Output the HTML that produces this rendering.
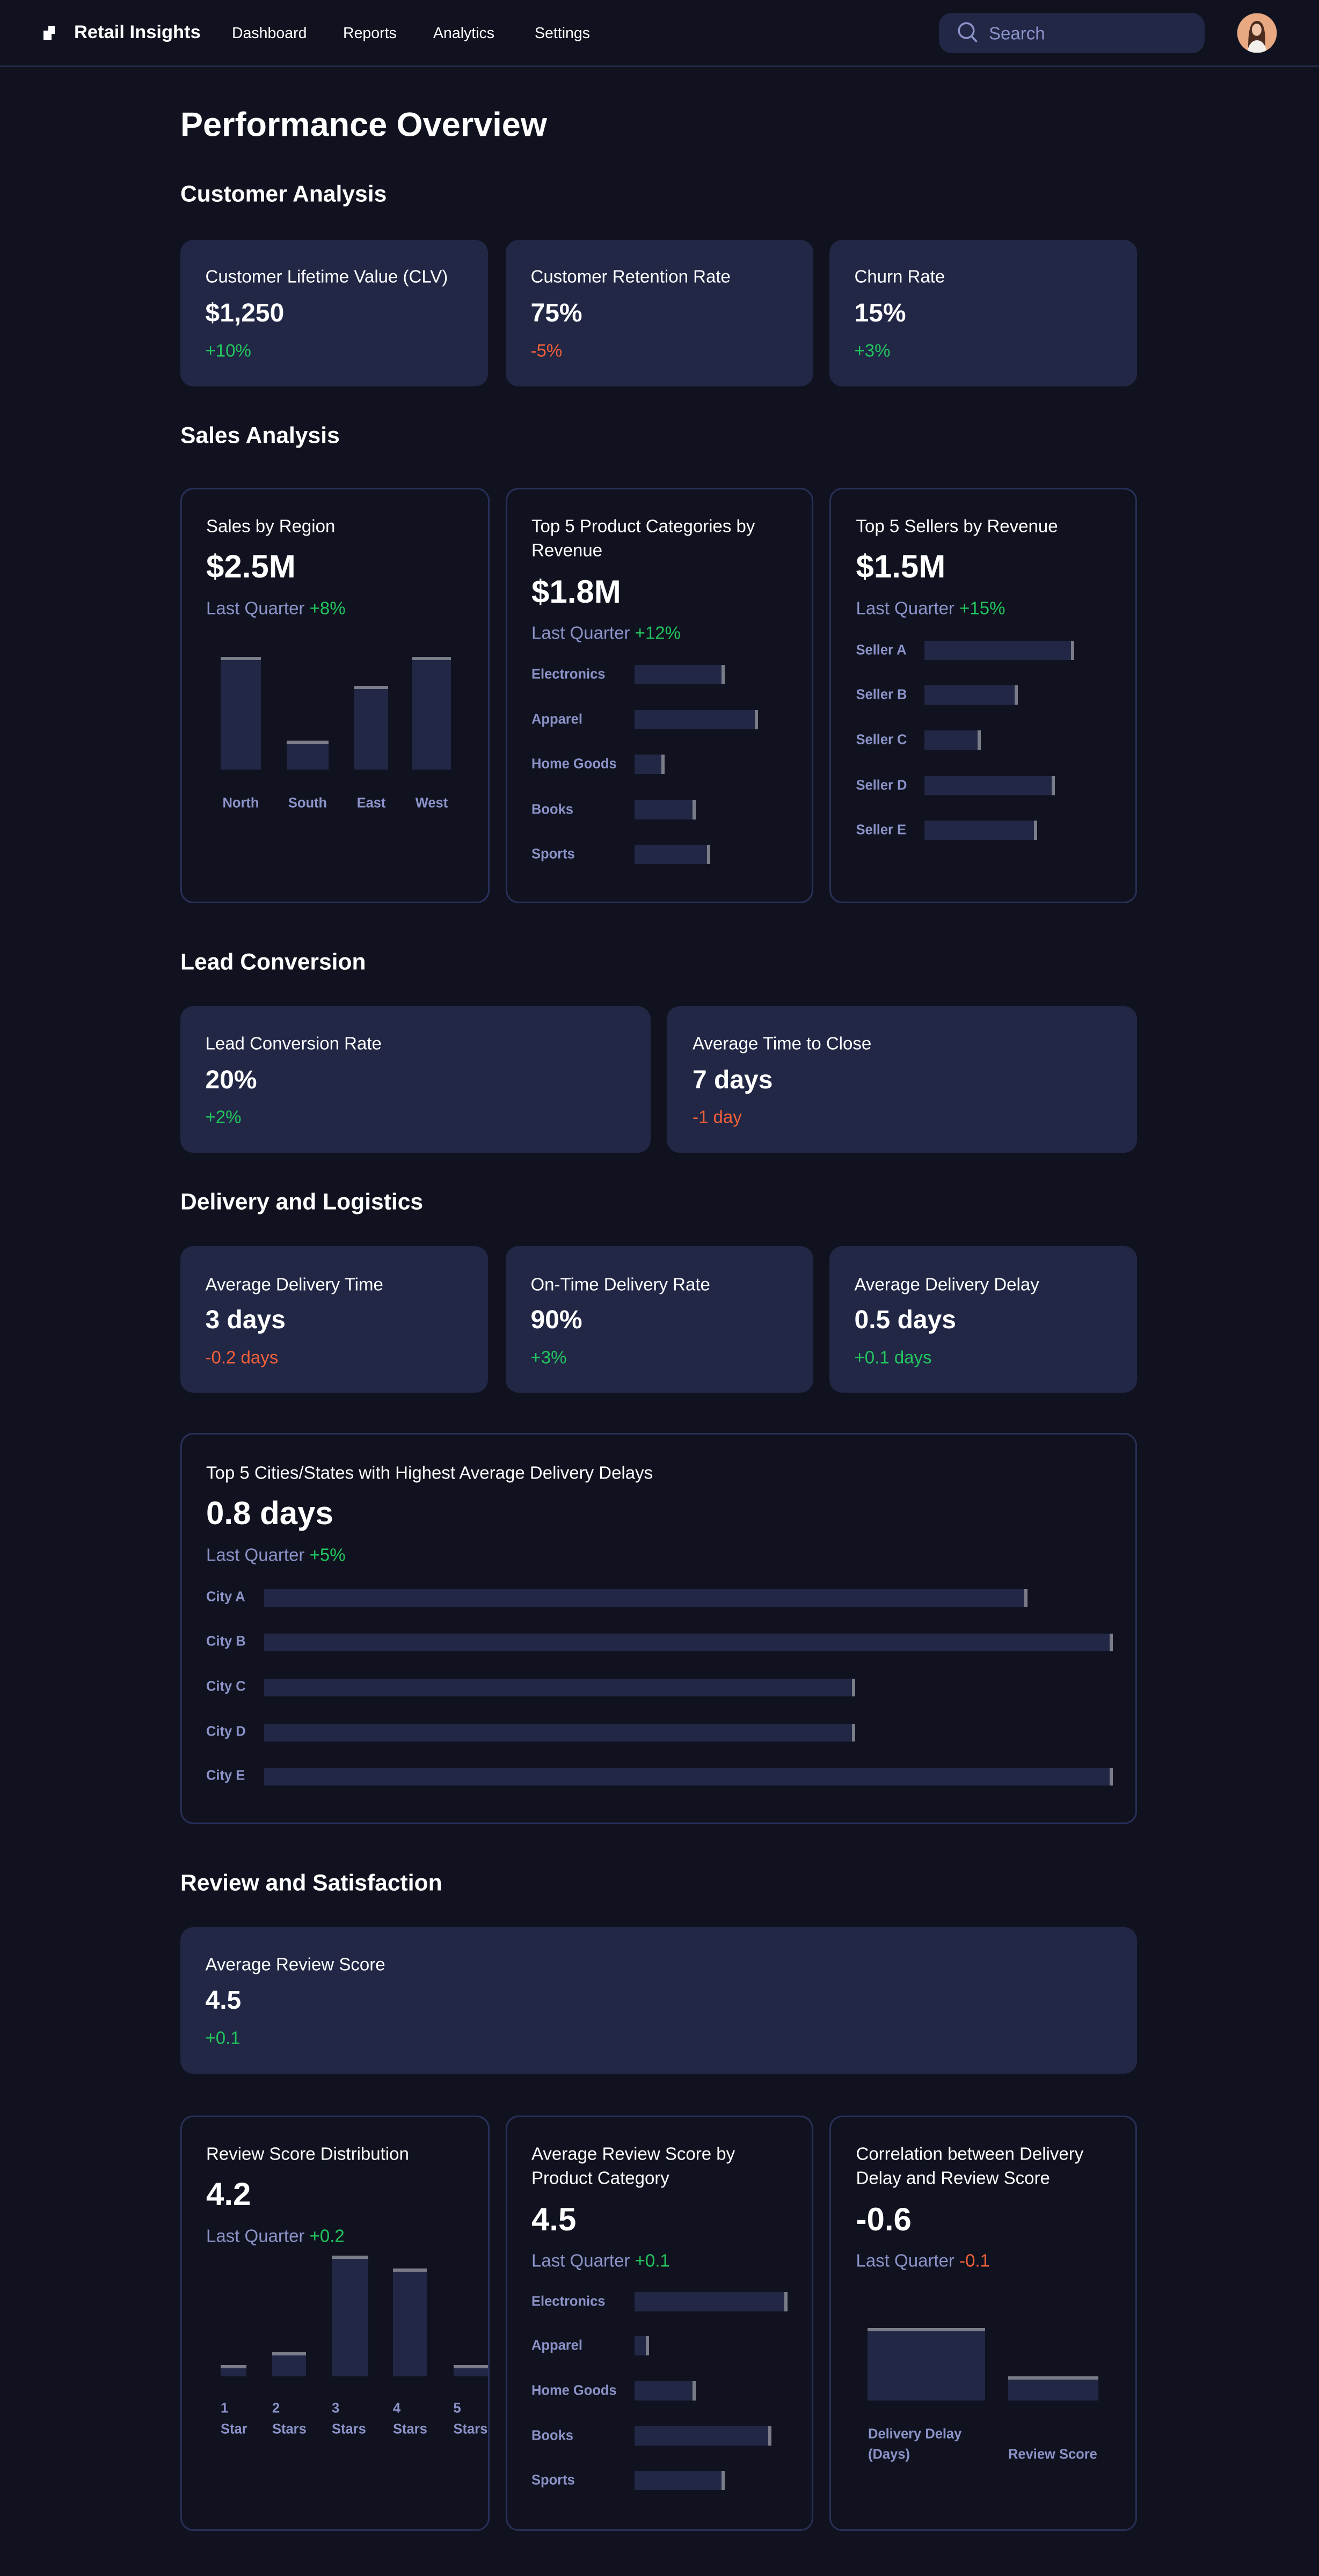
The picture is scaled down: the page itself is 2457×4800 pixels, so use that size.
<!DOCTYPE html>
<html><head><meta charset="utf-8">
<style>
html,body{margin:0;padding:0;background:#10131f;}
body{width:819px;height:1600px;zoom:3;position:relative;overflow:hidden;font-family:"Liberation Sans",sans-serif;color:#fff;}
.a{position:absolute;white-space:nowrap;transform:translateY(-50%);line-height:1;}
.card{position:absolute;background:#212745;border-radius:8px;}
.bcard{position:absolute;border:1px solid #283058;border-radius:8px;box-sizing:border-box;}
.h{font-size:14.2px;font-weight:bold;}
.ct{font-size:11px;}
.cv{font-size:16px;font-weight:bold;}
.bv{font-size:20px;font-weight:bold;}
.g{color:#22c55e;}
.r{color:#f2603a;}
.s{color:#8b93c9;}
.lab{font-size:8.5px;font-weight:bold;color:#8b93c9;}
.vb{position:absolute;background:#212745;border-top:2px solid #7a7d88;box-sizing:border-box;}
.hb{position:absolute;background:#212745;border-right:2px solid #7a7d88;box-sizing:border-box;}
</style></head><body>
<!-- header -->
<div style="position:absolute;left:0;top:40.5px;width:819px;height:1px;background:#232a4a"></div>
<div style="position:absolute;left:27px;top:19px;width:5px;height:6px;background:#fff"></div>
<div style="position:absolute;left:30px;top:16px;width:4px;height:5px;background:#fff"></div>
<div class="a" style="left:46px;top:20px;font-size:11.5px;font-weight:bold">Retail Insights</div>
<div class="a" style="left:144px;top:20.5px;font-size:9.5px">Dashboard</div>
<div class="a" style="left:213px;top:20.5px;font-size:9.5px">Reports</div>
<div class="a" style="left:269px;top:20.5px;font-size:9.5px">Analytics</div>
<div class="a" style="left:332px;top:20.5px;font-size:9.5px">Settings</div>
<div style="position:absolute;left:583px;top:8px;width:165px;height:25px;background:#212745;border-radius:8px"></div>
<svg style="position:absolute;left:594px;top:13px" width="14" height="15" viewBox="0 0 14 15"><circle cx="6" cy="6" r="4.6" fill="none" stroke="#8b93c9" stroke-width="1.2"/><line x1="9.4" y1="9.6" x2="12.5" y2="13" stroke="#8b93c9" stroke-width="1.2"/></svg>
<div class="a s" style="left:614px;top:20.5px;font-size:11px">Search</div>
<svg style="position:absolute;left:768px;top:8px" width="25" height="25" viewBox="0 0 25 25"><defs><clipPath id="c"><circle cx="12.5" cy="12.5" r="12.3"/></clipPath></defs><circle cx="12.5" cy="12.5" r="12.3" fill="#e8a882"/><g clip-path="url(#c)"><path d="M7 22 C7 12 8 5 12.5 5 C17 5 18 12 17.5 22 Z" fill="#4a2c1f"/><ellipse cx="12.3" cy="10.5" rx="3" ry="3.8" fill="#f0c4a8"/><path d="M6 26 C7 19 10 17 12.5 17 C15 17 18 19 19 26 Z" fill="#f2f0ea"/></g></svg>

<div class="a" style="left:112px;top:77.5px;font-size:21px;font-weight:bold">Performance Overview</div>

<!-- Customer Analysis -->
<div class="a h" style="left:112px;top:120.5px">Customer Analysis</div>
<div class="card" style="left:112px;top:149px;width:191px;height:91px"></div>
<div class="card" style="left:314px;top:149px;width:191px;height:91px"></div>
<div class="card" style="left:515px;top:149px;width:191px;height:91px"></div>
<div class="a ct" style="left:127.5px;top:171.5px">Customer Lifetime Value (CLV)</div>
<div class="a cv" style="left:127.5px;top:194.5px">$1,250</div>
<div class="a ct g" style="left:127.5px;top:217.5px">+10%</div>
<div class="a ct" style="left:329.5px;top:171.5px">Customer Retention Rate</div>
<div class="a cv" style="left:329.5px;top:194.5px">75%</div>
<div class="a ct r" style="left:329.5px;top:217.5px">-5%</div>
<div class="a ct" style="left:530.5px;top:171.5px">Churn Rate</div>
<div class="a cv" style="left:530.5px;top:194.5px">15%</div>
<div class="a ct g" style="left:530.5px;top:217.5px">+3%</div>

<!-- Sales Analysis -->
<div class="a h" style="left:112px;top:270.5px">Sales Analysis</div>
<div class="bcard" style="left:112px;top:303px;width:192px;height:258px"></div>
<div class="bcard" style="left:314px;top:303px;width:191px;height:258px"></div>
<div class="bcard" style="left:515px;top:303px;width:191px;height:258px"></div>
<div class="a ct" style="left:128px;top:326.5px">Sales by Region</div>
<div class="a bv" style="left:128px;top:352px">$2.5M</div>
<div class="a ct s" style="left:128px;top:377.5px">Last Quarter <span class="g">+8%</span></div>
<div class="vb" style="left:137px;top:408px;width:25px;height:70px"></div>
<div class="vb" style="left:178px;top:460px;width:26px;height:18px"></div>
<div class="vb" style="left:220px;top:426px;width:21px;height:52px"></div>
<div class="vb" style="left:256px;top:408px;width:24px;height:70px"></div>
<div class="a lab" style="left:149.5px;top:499px;transform:translate(-50%,-50%)">North</div>
<div class="a lab" style="left:191px;top:499px;transform:translate(-50%,-50%)">South</div>
<div class="a lab" style="left:230.5px;top:499px;transform:translate(-50%,-50%)">East</div>
<div class="a lab" style="left:268px;top:499px;transform:translate(-50%,-50%)">West</div>

<div class="a ct" style="left:330px;top:326.5px">Top 5 Product Categories by</div>
<div class="a ct" style="left:330px;top:341.5px">Revenue</div>
<div class="a bv" style="left:330px;top:367.5px">$1.8M</div>
<div class="a ct s" style="left:330px;top:393px">Last Quarter <span class="g">+12%</span></div>
<div class="a lab" style="left:330px;top:419px">Electronics</div><div class="hb" style="left:394px;top:413px;width:56px;height:12px"></div>
<div class="a lab" style="left:330px;top:447px">Apparel</div><div class="hb" style="left:394px;top:441px;width:76.5px;height:12px"></div>
<div class="a lab" style="left:330px;top:474.5px">Home Goods</div><div class="hb" style="left:394px;top:468.5px;width:18.5px;height:12px"></div>
<div class="a lab" style="left:330px;top:503px">Books</div><div class="hb" style="left:394px;top:497px;width:38px;height:12px"></div>
<div class="a lab" style="left:330px;top:530.5px">Sports</div><div class="hb" style="left:394px;top:524.5px;width:47px;height:12px"></div>

<div class="a ct" style="left:531.5px;top:326.5px">Top 5 Sellers by Revenue</div>
<div class="a bv" style="left:531.5px;top:352px">$1.5M</div>
<div class="a ct s" style="left:531.5px;top:377.5px">Last Quarter <span class="g">+15%</span></div>
<div class="a lab" style="left:531.5px;top:404px">Seller A</div><div class="hb" style="left:574px;top:398px;width:93px;height:12px"></div>
<div class="a lab" style="left:531.5px;top:431.5px">Seller B</div><div class="hb" style="left:574px;top:425.5px;width:58px;height:12px"></div>
<div class="a lab" style="left:531.5px;top:459.5px">Seller C</div><div class="hb" style="left:574px;top:453.5px;width:35px;height:12px"></div>
<div class="a lab" style="left:531.5px;top:488px">Seller D</div><div class="hb" style="left:574px;top:482px;width:81px;height:12px"></div>
<div class="a lab" style="left:531.5px;top:515.5px">Seller E</div><div class="hb" style="left:574px;top:509.5px;width:70px;height:12px"></div>

<!-- Lead Conversion -->
<div class="a h" style="left:112px;top:597.5px">Lead Conversion</div>
<div class="card" style="left:112px;top:625px;width:292px;height:91px"></div>
<div class="card" style="left:414px;top:625px;width:292px;height:91px"></div>
<div class="a ct" style="left:127.5px;top:648px">Lead Conversion Rate</div>
<div class="a cv" style="left:127.5px;top:671px">20%</div>
<div class="a ct g" style="left:127.5px;top:693.5px">+2%</div>
<div class="a ct" style="left:430px;top:648px">Average Time to Close</div>
<div class="a cv" style="left:430px;top:671px">7 days</div>
<div class="a ct r" style="left:430px;top:693.5px">-1 day</div>

<!-- Delivery -->
<div class="a h" style="left:112px;top:746.5px">Delivery and Logistics</div>
<div class="card" style="left:112px;top:774px;width:191px;height:91px"></div>
<div class="card" style="left:314px;top:774px;width:191px;height:91px"></div>
<div class="card" style="left:515px;top:774px;width:191px;height:91px"></div>
<div class="a ct" style="left:127.5px;top:797.5px">Average Delivery Time</div>
<div class="a cv" style="left:127.5px;top:820px">3 days</div>
<div class="a ct r" style="left:127.5px;top:843px">-0.2 days</div>
<div class="a ct" style="left:329.5px;top:797.5px">On-Time Delivery Rate</div>
<div class="a cv" style="left:329.5px;top:820px">90%</div>
<div class="a ct g" style="left:329.5px;top:843px">+3%</div>
<div class="a ct" style="left:530.5px;top:797.5px">Average Delivery Delay</div>
<div class="a cv" style="left:530.5px;top:820px">0.5 days</div>
<div class="a ct g" style="left:530.5px;top:843px">+0.1 days</div>

<div class="bcard" style="left:112px;top:890px;width:594px;height:243px"></div>
<div class="a ct" style="left:128px;top:914.5px">Top 5 Cities/States with Highest Average Delivery Delays</div>
<div class="a bv" style="left:128px;top:940px">0.8 days</div>
<div class="a ct s" style="left:128px;top:965.5px">Last Quarter <span class="g">+5%</span></div>
<div class="a lab" style="left:128px;top:992px">City A</div><div class="hb" style="left:164px;top:987px;width:474px;height:11px"></div>
<div class="a lab" style="left:128px;top:1019.5px">City B</div><div class="hb" style="left:164px;top:1014.5px;width:527px;height:11px"></div>
<div class="a lab" style="left:128px;top:1047.5px">City C</div><div class="hb" style="left:164px;top:1042.5px;width:367px;height:11px"></div>
<div class="a lab" style="left:128px;top:1075.5px">City D</div><div class="hb" style="left:164px;top:1070.5px;width:367px;height:11px"></div>
<div class="a lab" style="left:128px;top:1103px">City E</div><div class="hb" style="left:164px;top:1098px;width:527px;height:11px"></div>

<!-- Review -->
<div class="a h" style="left:112px;top:1169.5px">Review and Satisfaction</div>
<div class="card" style="left:112px;top:1197px;width:594px;height:91px"></div>
<div class="a ct" style="left:127.5px;top:1220px">Average Review Score</div>
<div class="a cv" style="left:127.5px;top:1242.5px">4.5</div>
<div class="a ct g" style="left:127.5px;top:1265.5px">+0.1</div>

<div class="bcard" style="left:112px;top:1314px;width:192px;height:258px;overflow:hidden">
 <div class="vb" style="left:24px;top:154px;width:16px;height:7px"></div>
 <div class="vb" style="left:56px;top:146px;width:21px;height:15px"></div>
 <div class="vb" style="left:93px;top:86px;width:22.5px;height:75px"></div>
 <div class="vb" style="left:131px;top:94px;width:21px;height:67px"></div>
 <div class="vb" style="left:168.5px;top:154px;width:22px;height:7px"></div>
 <div class="a lab" style="left:24px;top:181px">1</div><div class="a lab" style="left:24px;top:194px">Star</div>
 <div class="a lab" style="left:56px;top:181px">2</div><div class="a lab" style="left:56px;top:194px">Stars</div>
 <div class="a lab" style="left:93px;top:181px">3</div><div class="a lab" style="left:93px;top:194px">Stars</div>
 <div class="a lab" style="left:131px;top:181px">4</div><div class="a lab" style="left:131px;top:194px">Stars</div>
 <div class="a lab" style="left:168.5px;top:181px">5</div><div class="a lab" style="left:168.5px;top:194px">Stars</div>
</div>
<div class="a ct" style="left:128px;top:1337.5px">Review Score Distribution</div>
<div class="a bv" style="left:128px;top:1363px">4.2</div>
<div class="a ct s" style="left:128px;top:1388.5px">Last Quarter <span class="g">+0.2</span></div>

<div class="bcard" style="left:314px;top:1314px;width:191px;height:258px"></div>
<div class="a ct" style="left:330px;top:1337.5px">Average Review Score by</div>
<div class="a ct" style="left:330px;top:1352.5px">Product Category</div>
<div class="a bv" style="left:330px;top:1378.5px">4.5</div>
<div class="a ct s" style="left:330px;top:1404px">Last Quarter <span class="g">+0.1</span></div>
<div class="a lab" style="left:330px;top:1429.5px">Electronics</div><div class="hb" style="left:394px;top:1423.5px;width:95px;height:12px"></div>
<div class="a lab" style="left:330px;top:1457px">Apparel</div><div class="hb" style="left:394px;top:1451px;width:9px;height:12px"></div>
<div class="a lab" style="left:330px;top:1485px">Home Goods</div><div class="hb" style="left:394px;top:1479px;width:38px;height:12px"></div>
<div class="a lab" style="left:330px;top:1513px">Books</div><div class="hb" style="left:394px;top:1507px;width:85px;height:12px"></div>
<div class="a lab" style="left:330px;top:1540.5px">Sports</div><div class="hb" style="left:394px;top:1534.5px;width:56px;height:12px"></div>

<div class="bcard" style="left:515px;top:1314px;width:191px;height:258px"></div>
<div class="a ct" style="left:531.5px;top:1337.5px">Correlation between Delivery</div>
<div class="a ct" style="left:531.5px;top:1352.5px">Delay and Review Score</div>
<div class="a bv" style="left:531.5px;top:1378.5px">-0.6</div>
<div class="a ct s" style="left:531.5px;top:1404px">Last Quarter <span class="r">-0.1</span></div>
<div class="vb" style="left:538.5px;top:1446px;width:73px;height:45px"></div>
<div class="vb" style="left:626px;top:1476px;width:56px;height:15px"></div>
<div class="a lab" style="left:539px;top:1512px">Delivery Delay</div>
<div class="a lab" style="left:539px;top:1524.5px">(Days)</div>
<div class="a lab" style="left:626px;top:1524.5px">Review Score</div>
</body></html>
